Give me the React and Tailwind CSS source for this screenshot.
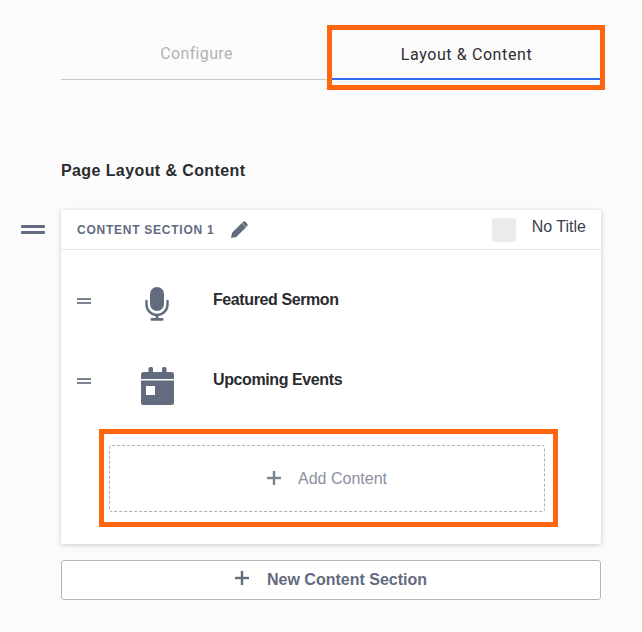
import { Plus } from 'lucide-react';

const sans = 'font-["Liberation_Sans",Arial,sans-serif]';
const roboto = 'font-["Roboto",Arial,sans-serif]';

function DragLines({ big }) {
  return big ? (
    <div className="flex flex-col gap-[3px] w-[24px]">
      <div className="h-[3px] bg-[#636b7e] rounded-[1px]" />
      <div className="h-[3px] bg-[#636b7e] rounded-[1px]" />
    </div>
  ) : (
    <div className="flex flex-col gap-[2px] w-[14px]">
      <div className="h-[2px] bg-[#7b8294]" />
      <div className="h-[2px] bg-[#7b8294]" />
    </div>
  );
}

function MicIcon() {
  return (
    <svg width="24" height="34" viewBox="0 0 24 34" fill="none">
      <rect x="5" y="0" width="14" height="24" rx="7" fill="#636b7e" />
      <path d="M1.500 14v3.500a10.500 10.500 0 0 0 21 0V14" stroke="#636b7e" strokeWidth="2.4" strokeLinecap="round" />
      <rect x="10.700" y="27" width="2.600" height="5" fill="#636b7e" />
      <rect x="5.500" y="31" width="13" height="2.800" rx="1.200" fill="#636b7e" />
    </svg>
  );
}

function CalendarIcon() {
  return (
    <svg width="33" height="38" viewBox="0 0 33 38">
      <rect x="7.500" y="0" width="4.500" height="8" rx="1.500" fill="#636b7e" />
      <rect x="21" y="0" width="4.500" height="8" rx="1.500" fill="#636b7e" />
      <path d="M2.500 5H30.500a2.500 2.500 0 0 1 2.500 2.500V12H0V7.500A2.500 2.500 0 0 1 2.500 5Z" fill="#636b7e" />
      <path d="M0 13.500H33V35.500a2.500 2.500 0 0 1-2.500 2.500H2.500A2.500 2.500 0 0 1 0 35.500Z" fill="#636b7e" />
      <rect x="5" y="19" width="9" height="9" fill="#ffffff" />
    </svg>
  );
}

function PencilIcon() {
  return (
    <svg width="17" height="17" viewBox="0 0 16 16">
      <path d="M0 16l1-5L10.200 1.800l4 4L5 15Z" fill="#636b7e" />
      <path d="M11.300.8c.7-.7 1.600-.7 2.200-.1l1.800 1.800c.6.6.6 1.500-.1 2.200l-.9.900-3.900-3.900Z" fill="#636b7e" />
    </svg>
  );
}

function ContentRow({ icon, iconClass, label }) {
  return (
    <div className="h-[80px] flex items-center pl-[16px]">
      <div className="w-[56px] mt-[2px] flex">
        <DragLines />
      </div>
      <div className={`w-[49px] flex justify-center ${iconClass}`}>{icon}</div>
      <div className={`ml-[31px] text-[16px] tracking-[-0.4px] font-bold text-[#2b2b2f] ${sans}`}>{label}</div>
    </div>
  );
}

export default function App() {
  return (
    <div className={`w-[642px] h-[632px] bg-[#fbfbfb] overflow-hidden ${sans}`}>
      <div className="ml-[61px] w-[540px] h-[80px] pt-[25px] flex">
        <div className="flex-1 border-b border-[#c9c9c9] flex justify-center">
          <span className={`mt-[19px] text-[16px] leading-[20px] tracking-[0.35px] text-[#b3b3b3] ${roboto}`}>Configure</span>
        </div>
        <div className="relative w-[269px] border-b-2 border-[#2f6bf0] flex justify-center">
          <span className={`mt-[20px] text-[16px] leading-[20px] tracking-[0.6px] text-[#2e2e33] ${roboto}`}>Layout &amp; Content</span>
          <div className="absolute left-[-5px] right-[-4px] top-0 bottom-[-12px] border-[5px] border-[#ff660d]" />
        </div>
      </div>

      <div className="ml-[61px] mt-[81px] text-[16px] leading-[20px] font-bold tracking-[0.4px] text-[#2b2b2f]">
        Page Layout &amp; Content
      </div>

      <div className="mt-[29px] ml-[21px] flex items-start">
        <div className="w-[40px] mt-[15px]">
          <DragLines big />
        </div>
        <div className="w-[540px] h-[334px] bg-white rounded-[2px] shadow-[0_1px_5px_rgba(0,0,0,0.2)]">
          <div className="h-[40px] border-b border-[#e6e6e8] flex items-center pl-[16px] pr-[15px]">
            <span className="text-[12px] font-bold tracking-[0.75px] text-[#636b7e]">CONTENT SECTION 1</span>
            <span className="ml-[17px]">
              <PencilIcon />
            </span>
            <div className="ml-auto w-[24px] h-[24px] rounded-[3px] bg-[#ebebed]" />
            <span className="ml-[16px] -mt-[6px] text-[16px] text-[#3a3f4d]">No Title</span>
          </div>
          <div className="pt-[10px]">
            <ContentRow icon={<MicIcon />} iconClass="mt-[8px] pr-[2px]" label="Featured Sermon" />
            <ContentRow icon={<CalendarIcon />} iconClass="mt-[12px]" label="Upcoming Events" />
          </div>
          <div className="relative mt-[25px] ml-[48px] w-[436px] h-[67px] rounded-[3px] border border-dashed border-[#b0b0b0] flex items-center justify-center gap-[12px]">
            <Plus size={24} strokeWidth={2.4} strokeLinecap="butt" color="#7b8294" className="-mt-[2px]" />
            <span className="mr-[5px] text-[16px] text-[#8a90a0]">Add Content</span>
            <div className="absolute left-[-11px] right-[-14px] top-[-17px] bottom-[-16px] border-[5px] border-[#ff660d]" />
          </div>
        </div>
      </div>

      <div className="mt-[16px] ml-[61px] w-[540px] h-[40px] bg-white border border-[#b4b5bd] rounded-[3px] flex items-center justify-center gap-[13px]">
        <Plus size={24} strokeWidth={2.4} strokeLinecap="butt" color="#636b7e" className="-mt-[4px]" />
        <span className="mr-[5px] text-[16px] font-bold text-[#636b7e]">New Content Section</span>
      </div>
    </div>
  );
}
